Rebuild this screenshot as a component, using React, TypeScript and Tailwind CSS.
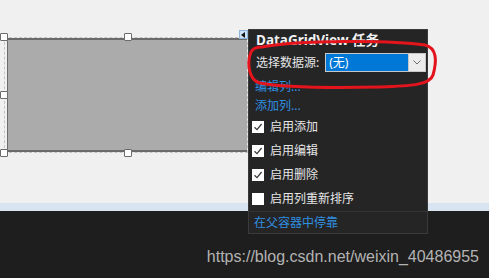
import React from "react";

const cjk = { fontFamily: '"Segoe UI", "Noto Sans", "Noto Sans CJK SC", sans-serif' };

const Handle = ({ x, y }: { x: number; y: number }) => (
  <div
    className="absolute w-[8px] h-[8px] bg-white border border-[#6b6b6b] rounded-[1px]"
    style={{ left: x - 4, top: y - 4 }}
  />
);

const CheckRow = ({ label, checked }: { label: string; checked: boolean }) => (
  <div className="flex items-center h-[24px] pl-[3px] gap-[6px]">
    <span className="w-[12px] h-[12px] bg-white flex items-center justify-center">
      {checked && (
        <svg width="10" height="10" viewBox="0 0 10 10">
          <path d="M1.5 5.2 L4 7.6 L8.6 2" fill="none" stroke="#3a3a3a" strokeWidth="1.3" />
        </svg>
      )}
    </span>
    <span className="text-[12px] text-[#e6e6e6]">{label}</span>
  </div>
);

export default function App() {
  return (
    <div className="w-[489px] h-[278px] flex flex-col overflow-hidden relative" style={cjk}>
      {/* designer surface */}
      <div className="h-[203px] bg-[#f0f0f0] relative">
        <div className="absolute left-[4px] top-[37px] w-[244px] h-[116px] border border-dashed border-[#c4c4c4]">
          <div className="ml-[2px] h-full bg-[#ababab] border-y-2 border-l border-[#6a6a6a]" />
        </div>
        <Handle x={4} y={37} />
        <Handle x={128} y={37} />
        <Handle x={4} y={95} />
        <Handle x={4} y={153} />
        <Handle x={128} y={153} />
        {/* smart tag */}
        <div className="absolute left-[239px] top-[30px] w-[9px] h-[9px] bg-[#cde2f5] border border-[#8fb3d6] flex items-center justify-center">
          <svg width="5" height="6" viewBox="0 0 5 6">
            <path d="M4 0 L0 3 L4 6 Z" fill="#111" />
          </svg>
        </div>
      </div>
      <div className="h-[8px] bg-[#d9e4f1]" />
      <div className="flex-1 bg-[#1e1e1e] flex items-start justify-end pr-[10px] pt-[37px]">
        <span className="text-[16px] leading-[18px] text-[#b3b3b3]" style={{ fontFamily: '"Liberation Sans", Arial, sans-serif' }}>
          https://blog.csdn.net/weixin_40486955
        </span>
      </div>

      {/* tasks panel */}
      <div className="absolute left-[248px] top-[29px] w-[180px] h-[205px] bg-[#252526] border border-[#3a3a3c] flex flex-col">
        <div className="px-[7px] h-[20px] text-[13.5px] font-bold text-[#f1f1f1] leading-[20px]">DataGridView 任务</div>
        <div className="flex items-center h-[29px] pl-[7px] gap-[6px]">
          <span className="text-[12px] text-[#e6e6e6]">选择数据源:</span>
          <div className="flex h-[19px] w-[101px] border border-[#c8c8c8] bg-[#0078d7]">
            <span className="flex-1 text-[12px] text-white leading-[17px] pl-[3px]">(无)</span>
            <span className="w-[17px] bg-[#ececec] border-l border-[#c8c8c8] flex items-center justify-center">
              <svg width="8" height="5" viewBox="0 0 8 5">
                <path d="M0.5 0.5 L4 4 L7.5 0.5" fill="none" stroke="#6b6b6b" strokeWidth="1" />
              </svg>
            </span>
          </div>
        </div>
        <div className="flex flex-col pl-[6px] pt-[1px] text-[12px] text-[#2f8fe0]">
          <span className="h-[21px] leading-[21px]">编辑列...</span>
          <span className="h-[18px] leading-[18px]">添加列...</span>
        </div>
        <div className="flex flex-col">
          <CheckRow label="启用添加" checked />
          <CheckRow label="启用编辑" checked />
          <CheckRow label="启用删除" checked />
          <CheckRow label="启用列重新排序" checked={false} />
        </div>
        <div className="mt-auto border-t border-[#333336] h-[23px] pl-[5px] text-[12px] text-[#2f8fe0] leading-[21px]">
          在父容器中停靠
        </div>
      </div>

      {/* red annotation ring */}
      <svg className="absolute left-0 top-0 pointer-events-none" width="489" height="278">
        <path
          d="M262 47 C300 40 392 40 425 45 C437 48 437 61 433 75 C430 85 410 86 380 87 C330 88 280 87 260 83 C248 80 247 62 251 52 C253 48 258 47 262 47 Z"
          fill="none"
          stroke="#e3141c"
          strokeWidth="3"
        />
      </svg>
    </div>
  );
}
